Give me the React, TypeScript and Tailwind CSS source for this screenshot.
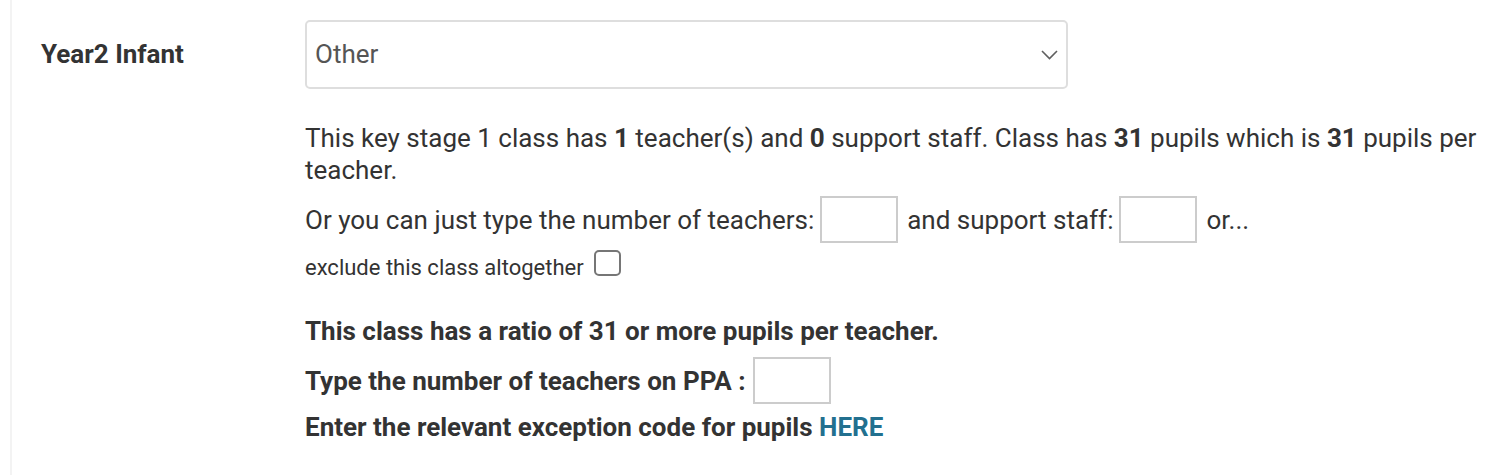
import { useState } from 'react'

const SmallBox = () => (
  <input
    type="text"
    className="h-[47px] w-[78px] shrink-0 border-2 border-[#cccccc] bg-white px-2 text-[26px] outline-none"
  />
)

const App = () => {
  const [band, setBand] = useState('Other')

  return (
    <div className="min-h-[475px] bg-white font-['Roboto',sans-serif] text-[#333333]">
      <div className="ml-[10px] flex min-h-[475px] border-l-2 border-[#f3f3f3] pl-[29px] pt-5">
        <div className="w-[264px] shrink-0 pt-[18px] text-[26px] font-bold leading-[32px]">Year2 Infant</div>

        <div className="flex-1 pr-[12px]">
          <div className="relative h-[69px] w-[763px]">
            <select
              value={band}
              onChange={(e) => setBand(e.target.value)}
              className="h-full w-full appearance-none rounded-[5px] border-2 border-[#dedede] bg-white pl-[8px] text-[26px] text-[#555555] outline-none"
            >
              <option>Other</option>
              <option>Reception</option>
              <option>Year1 Infant</option>
            </select>
            <svg
              className="pointer-events-none absolute right-[10px] top-[30px]"
              width="17"
              height="10"
              viewBox="0 0 17 10"
              fill="none"
            >
              <polyline points="1,1 8.5,8.5 16,1" stroke="#5f5f5f" strokeWidth="1.6" />
            </svg>
          </div>

          <p className="mt-[33px] text-[26px] leading-[32px]">
            This key stage 1 class has <b>1</b> teacher(s) and <b>0</b> support staff. Class has <b>31</b> pupils which is{' '}
            <b>31</b> pupils per teacher.
          </p>

          <div className="mt-[10px] flex items-center text-[26px] leading-[32px]">
            <span className="mr-[6px]">Or you can just type the number of teachers:</span>
            <SmallBox />
            <span className="ml-[9px] mr-[6px]">and support staff:</span>
            <SmallBox />
            <span className="ml-[9px]">or...</span>
          </div>

          <div className="mt-[7px] flex h-[26px] items-end gap-[10px] text-[22px] leading-[16px]">
            <span>exclude this class altogether</span>
            <span className="h-[26px] w-[27px] rounded-[5px] border-2 border-[#767676] bg-white" />
          </div>

          <p className="mt-[39px] text-[26px] font-bold leading-[32px]">
            This class has a ratio of 31 or more pupils per teacher.
          </p>

          <div className="mt-[10px] flex items-center text-[26px] font-bold leading-[32px]">
            <span className="mr-[7px]">Type the number of teachers on PPA :</span>
            <SmallBox />
          </div>

          <p className="mt-[7px] text-[26px] font-bold leading-[32px]">
            Enter the relevant exception code for pupils{' '}
            <a href="#" className="text-[#22708f]">
              HERE
            </a>
          </p>
        </div>
      </div>
    </div>
  )
}

export default App
